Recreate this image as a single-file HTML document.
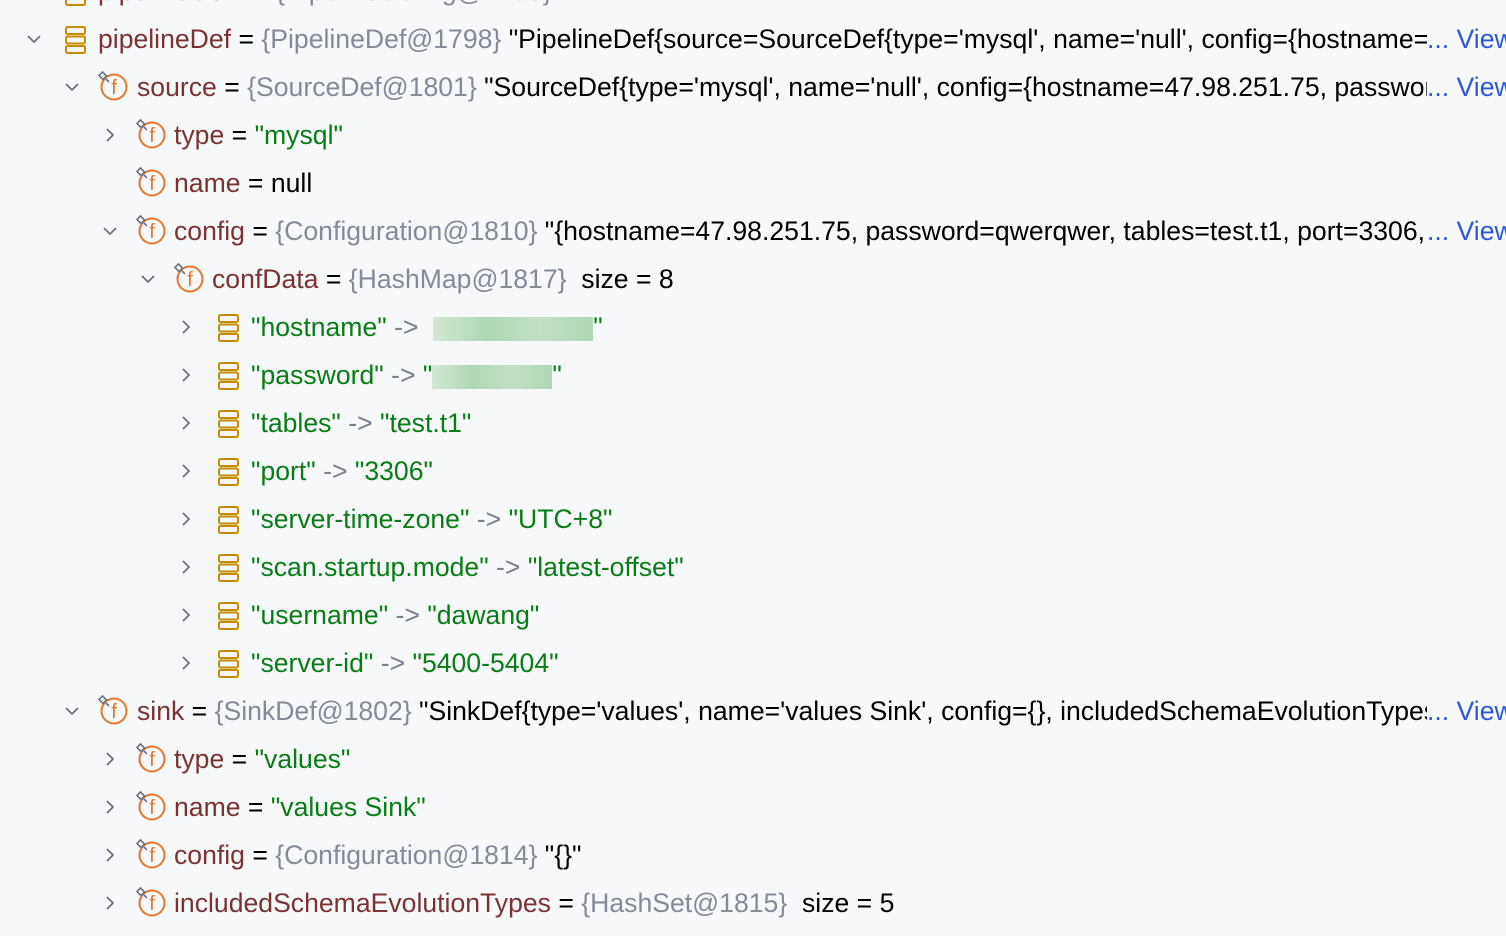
<!DOCTYPE html>
<html><head><meta charset="utf-8"><style>
html,body{margin:0;padding:0;background:#f7f8fa;width:1506px;height:936px;overflow:hidden}
body{font-family:"Liberation Sans",sans-serif;font-size:26.6px;color:#000;position:relative}
.r{position:absolute;left:0;height:48px;line-height:48px;white-space:nowrap;width:1506px}
.t{position:absolute;top:0;overflow:hidden;white-space:nowrap}
.chev{position:absolute;top:16px;width:16px;height:16px}
.ic{position:absolute;top:8px}
.n{color:#7b3232}.c{color:#858a99}.s{color:#087d15}.g{color:#7a7f8c}
.v{position:absolute;left:1427px;top:0;color:#2b5bd2}
.blur{display:inline-block;width:160px;height:24px;vertical-align:middle;background:linear-gradient(90deg,#cfe5cf,#a9d3ad,#bcdcbf,#a9d3ad);opacity:.9}
</style></head><body>

<div class="r" style="top:-33px">
<svg class="ic" style="left:64px;top:11px" width="24" height="28" viewBox="0 0 24 28"><g fill="none" stroke="#c98a00" stroke-width="2"><rect x="2" y="1" width="19" height="7" rx="1.5"/><rect x="2" y="10.5" width="19" height="7" rx="1.5"/><rect x="2" y="20" width="19" height="7" rx="1.5"/></g></svg>
<div class="t" style="left:98px"><span class="n">pipelineConf</span> = <span class="c">{PipelineConfig@1799}</span></div></div>

<div class="r" style="top:15px">
<svg class="chev" style="left:26px" viewBox="0 0 16 16"><path d="M2 5l6 6 6-6" fill="none" stroke="#6e7280" stroke-width="1.8"/></svg>
<svg class="ic" style="left:64px;top:11px" width="24" height="28" viewBox="0 0 24 28"><g fill="none" stroke="#c98a00" stroke-width="2"><rect x="2" y="1" width="19" height="7" rx="1.5"/><rect x="2" y="10.5" width="19" height="7" rx="1.5"/><rect x="2" y="20" width="19" height="7" rx="1.5"/></g></svg>
<div class="t" style="left:98px;width:1329px"><span class="n">pipelineDef</span> = <span class="c">{PipelineDef@1798}</span> "PipelineDef{source=SourceDef{type='mysql', name='null', config={hostname=47.98.251.75, password=qwerqwer}}"</div><span class="v">... View</span></div>

<div class="r" style="top:63px">
<svg class="chev" style="left:64px" viewBox="0 0 16 16"><path d="M2 5l6 6 6-6" fill="none" stroke="#6e7280" stroke-width="1.8"/></svg>
<svg class="ic" style="left:98px" width="32" height="32" viewBox="0 0 32 32"><circle cx="16" cy="16" r="12.5" fill="none" stroke="#e8762d" stroke-width="2"/><text x="16" y="23" font-family="Liberation Sans" font-size="20" fill="#e8762d" text-anchor="middle">f</text><path d="M1 4.5l3.5-3.5 4 4-3.5 3.5z" fill="#fff" stroke="#6e7280" stroke-width="1.6"/><path d="M8 8l3 3" stroke="#6e7280" stroke-width="1.6"/></svg>
<div class="t" style="left:137px;width:1290px"><span class="n">source</span> = <span class="c">{SourceDef@1801}</span> "SourceDef{type='mysql', name='null', config={hostname=47.98.251.75, password=qwerqwer}}"</div><span class="v">... View</span></div>

<div class="r" style="top:111px">
<svg class="chev" style="left:102px" viewBox="0 0 16 16"><path d="M5 2l6 6-6 6" fill="none" stroke="#6e7280" stroke-width="1.8"/></svg>
<svg class="ic" style="left:136px" width="32" height="32" viewBox="0 0 32 32"><circle cx="16" cy="16" r="12.5" fill="none" stroke="#e8762d" stroke-width="2"/><text x="16" y="23" font-family="Liberation Sans" font-size="20" fill="#e8762d" text-anchor="middle">f</text><path d="M1 4.5l3.5-3.5 4 4-3.5 3.5z" fill="#fff" stroke="#6e7280" stroke-width="1.6"/><path d="M8 8l3 3" stroke="#6e7280" stroke-width="1.6"/></svg>
<div class="t" style="left:174px"><span class="n">type</span> = <span class="s">"mysql"</span></div></div>

<div class="r" style="top:159px">
<svg class="ic" style="left:136px" width="32" height="32" viewBox="0 0 32 32"><circle cx="16" cy="16" r="12.5" fill="none" stroke="#e8762d" stroke-width="2"/><text x="16" y="23" font-family="Liberation Sans" font-size="20" fill="#e8762d" text-anchor="middle">f</text><path d="M1 4.5l3.5-3.5 4 4-3.5 3.5z" fill="#fff" stroke="#6e7280" stroke-width="1.6"/><path d="M8 8l3 3" stroke="#6e7280" stroke-width="1.6"/></svg>
<div class="t" style="left:174px"><span class="n">name</span> = null</div></div>

<div class="r" style="top:207px">
<svg class="chev" style="left:102px" viewBox="0 0 16 16"><path d="M2 5l6 6 6-6" fill="none" stroke="#6e7280" stroke-width="1.8"/></svg>
<svg class="ic" style="left:136px" width="32" height="32" viewBox="0 0 32 32"><circle cx="16" cy="16" r="12.5" fill="none" stroke="#e8762d" stroke-width="2"/><text x="16" y="23" font-family="Liberation Sans" font-size="20" fill="#e8762d" text-anchor="middle">f</text><path d="M1 4.5l3.5-3.5 4 4-3.5 3.5z" fill="#fff" stroke="#6e7280" stroke-width="1.6"/><path d="M8 8l3 3" stroke="#6e7280" stroke-width="1.6"/></svg>
<div class="t" style="left:174px;width:1253px"><span class="n">config</span> = <span class="c">{Configuration@1810}</span> "{hostname=47.98.251.75, password=qwerqwer, tables=test.t1, port=3306, server-time-zone=UTC+8}"</div><span class="v">... View</span></div>

<div class="r" style="top:255px">
<svg class="chev" style="left:140px" viewBox="0 0 16 16"><path d="M2 5l6 6 6-6" fill="none" stroke="#6e7280" stroke-width="1.8"/></svg>
<svg class="ic" style="left:174px" width="32" height="32" viewBox="0 0 32 32"><circle cx="16" cy="16" r="12.5" fill="none" stroke="#e8762d" stroke-width="2"/><text x="16" y="23" font-family="Liberation Sans" font-size="20" fill="#e8762d" text-anchor="middle">f</text><path d="M1 4.5l3.5-3.5 4 4-3.5 3.5z" fill="#fff" stroke="#6e7280" stroke-width="1.6"/><path d="M8 8l3 3" stroke="#6e7280" stroke-width="1.6"/></svg>
<div class="t" style="left:212px"><span class="n">confData</span> = <span class="c">{HashMap@1817}</span>&nbsp; size = 8</div></div>

<div class="r" style="top:687px">
<svg class="chev" style="left:64px" viewBox="0 0 16 16"><path d="M2 5l6 6 6-6" fill="none" stroke="#6e7280" stroke-width="1.8"/></svg>
<svg class="ic" style="left:98px" width="32" height="32" viewBox="0 0 32 32"><circle cx="16" cy="16" r="12.5" fill="none" stroke="#e8762d" stroke-width="2"/><text x="16" y="23" font-family="Liberation Sans" font-size="20" fill="#e8762d" text-anchor="middle">f</text><path d="M1 4.5l3.5-3.5 4 4-3.5 3.5z" fill="#fff" stroke="#6e7280" stroke-width="1.6"/><path d="M8 8l3 3" stroke="#6e7280" stroke-width="1.6"/></svg>
<div class="t" style="left:137px;width:1290px"><span class="n">sink</span> = <span class="c">{SinkDef@1802}</span> "SinkDef{type='values', name='values Sink', config={}, includedSchemaEvolutionTypes=[ADD_COLUMN, DROP_COLUMN]}"</div><span class="v">... View</span></div>

<div class="r" style="top:735px">
<svg class="chev" style="left:102px" viewBox="0 0 16 16"><path d="M5 2l6 6-6 6" fill="none" stroke="#6e7280" stroke-width="1.8"/></svg>
<svg class="ic" style="left:136px" width="32" height="32" viewBox="0 0 32 32"><circle cx="16" cy="16" r="12.5" fill="none" stroke="#e8762d" stroke-width="2"/><text x="16" y="23" font-family="Liberation Sans" font-size="20" fill="#e8762d" text-anchor="middle">f</text><path d="M1 4.5l3.5-3.5 4 4-3.5 3.5z" fill="#fff" stroke="#6e7280" stroke-width="1.6"/><path d="M8 8l3 3" stroke="#6e7280" stroke-width="1.6"/></svg>
<div class="t" style="left:174px"><span class="n">type</span> = <span class="s">"values"</span></div></div>

<div class="r" style="top:783px">
<svg class="chev" style="left:102px" viewBox="0 0 16 16"><path d="M5 2l6 6-6 6" fill="none" stroke="#6e7280" stroke-width="1.8"/></svg>
<svg class="ic" style="left:136px" width="32" height="32" viewBox="0 0 32 32"><circle cx="16" cy="16" r="12.5" fill="none" stroke="#e8762d" stroke-width="2"/><text x="16" y="23" font-family="Liberation Sans" font-size="20" fill="#e8762d" text-anchor="middle">f</text><path d="M1 4.5l3.5-3.5 4 4-3.5 3.5z" fill="#fff" stroke="#6e7280" stroke-width="1.6"/><path d="M8 8l3 3" stroke="#6e7280" stroke-width="1.6"/></svg>
<div class="t" style="left:174px"><span class="n">name</span> = <span class="s">"values Sink"</span></div></div>

<div class="r" style="top:831px">
<svg class="chev" style="left:102px" viewBox="0 0 16 16"><path d="M5 2l6 6-6 6" fill="none" stroke="#6e7280" stroke-width="1.8"/></svg>
<svg class="ic" style="left:136px" width="32" height="32" viewBox="0 0 32 32"><circle cx="16" cy="16" r="12.5" fill="none" stroke="#e8762d" stroke-width="2"/><text x="16" y="23" font-family="Liberation Sans" font-size="20" fill="#e8762d" text-anchor="middle">f</text><path d="M1 4.5l3.5-3.5 4 4-3.5 3.5z" fill="#fff" stroke="#6e7280" stroke-width="1.6"/><path d="M8 8l3 3" stroke="#6e7280" stroke-width="1.6"/></svg>
<div class="t" style="left:174px"><span class="n">config</span> = <span class="c">{Configuration@1814}</span> "{}"</div></div>

<div class="r" style="top:879px">
<svg class="chev" style="left:102px" viewBox="0 0 16 16"><path d="M5 2l6 6-6 6" fill="none" stroke="#6e7280" stroke-width="1.8"/></svg>
<svg class="ic" style="left:136px" width="32" height="32" viewBox="0 0 32 32"><circle cx="16" cy="16" r="12.5" fill="none" stroke="#e8762d" stroke-width="2"/><text x="16" y="23" font-family="Liberation Sans" font-size="20" fill="#e8762d" text-anchor="middle">f</text><path d="M1 4.5l3.5-3.5 4 4-3.5 3.5z" fill="#fff" stroke="#6e7280" stroke-width="1.6"/><path d="M8 8l3 3" stroke="#6e7280" stroke-width="1.6"/></svg>
<div class="t" style="left:174px"><span class="n">includedSchemaEvolutionTypes</span> = <span class="c">{HashSet@1815}</span>&nbsp; size = 5</div></div>

<div class="r" style="top:927px">
<svg class="chev" style="left:64px" viewBox="0 0 16 16"><path d="M5 2l6 6-6 6" fill="none" stroke="#6e7280" stroke-width="1.8"/></svg>
</div>

<div class="r" style="top:303px"><svg class="chev" style="left:178px" viewBox="0 0 16 16"><path d="M5 2l6 6-6 6" fill="none" stroke="#6e7280" stroke-width="1.8"/></svg><svg class="ic" style="left:217px;top:11px" width="24" height="28" viewBox="0 0 24 28"><g fill="none" stroke="#c98a00" stroke-width="2"><rect x="2" y="1" width="19" height="7" rx="1.5"/><rect x="2" y="10.5" width="19" height="7" rx="1.5"/><rect x="2" y="20" width="19" height="7" rx="1.5"/></g></svg><div class="t" style="left:251px"><span class="s">"hostname"</span> <span class="g">-&gt;</span> <span class="s">&nbsp;<span class="blur"></span>"</span></div></div>
<div class="r" style="top:351px"><svg class="chev" style="left:178px" viewBox="0 0 16 16"><path d="M5 2l6 6-6 6" fill="none" stroke="#6e7280" stroke-width="1.8"/></svg><svg class="ic" style="left:217px;top:11px" width="24" height="28" viewBox="0 0 24 28"><g fill="none" stroke="#c98a00" stroke-width="2"><rect x="2" y="1" width="19" height="7" rx="1.5"/><rect x="2" y="10.5" width="19" height="7" rx="1.5"/><rect x="2" y="20" width="19" height="7" rx="1.5"/></g></svg><div class="t" style="left:251px"><span class="s">"password"</span> <span class="g">-&gt;</span> <span class="s">"<span class="blur" style="width:120px"></span>"</span></div></div>
<div class="r" style="top:399px"><svg class="chev" style="left:178px" viewBox="0 0 16 16"><path d="M5 2l6 6-6 6" fill="none" stroke="#6e7280" stroke-width="1.8"/></svg><svg class="ic" style="left:217px;top:11px" width="24" height="28" viewBox="0 0 24 28"><g fill="none" stroke="#c98a00" stroke-width="2"><rect x="2" y="1" width="19" height="7" rx="1.5"/><rect x="2" y="10.5" width="19" height="7" rx="1.5"/><rect x="2" y="20" width="19" height="7" rx="1.5"/></g></svg><div class="t" style="left:251px"><span class="s">"tables"</span> <span class="g">-&gt;</span> <span class="s">"test.t1"</span></div></div>
<div class="r" style="top:447px"><svg class="chev" style="left:178px" viewBox="0 0 16 16"><path d="M5 2l6 6-6 6" fill="none" stroke="#6e7280" stroke-width="1.8"/></svg><svg class="ic" style="left:217px;top:11px" width="24" height="28" viewBox="0 0 24 28"><g fill="none" stroke="#c98a00" stroke-width="2"><rect x="2" y="1" width="19" height="7" rx="1.5"/><rect x="2" y="10.5" width="19" height="7" rx="1.5"/><rect x="2" y="20" width="19" height="7" rx="1.5"/></g></svg><div class="t" style="left:251px"><span class="s">"port"</span> <span class="g">-&gt;</span> <span class="s">"3306"</span></div></div>
<div class="r" style="top:495px"><svg class="chev" style="left:178px" viewBox="0 0 16 16"><path d="M5 2l6 6-6 6" fill="none" stroke="#6e7280" stroke-width="1.8"/></svg><svg class="ic" style="left:217px;top:11px" width="24" height="28" viewBox="0 0 24 28"><g fill="none" stroke="#c98a00" stroke-width="2"><rect x="2" y="1" width="19" height="7" rx="1.5"/><rect x="2" y="10.5" width="19" height="7" rx="1.5"/><rect x="2" y="20" width="19" height="7" rx="1.5"/></g></svg><div class="t" style="left:251px"><span class="s">"server-time-zone"</span> <span class="g">-&gt;</span> <span class="s">"UTC+8"</span></div></div>
<div class="r" style="top:543px"><svg class="chev" style="left:178px" viewBox="0 0 16 16"><path d="M5 2l6 6-6 6" fill="none" stroke="#6e7280" stroke-width="1.8"/></svg><svg class="ic" style="left:217px;top:11px" width="24" height="28" viewBox="0 0 24 28"><g fill="none" stroke="#c98a00" stroke-width="2"><rect x="2" y="1" width="19" height="7" rx="1.5"/><rect x="2" y="10.5" width="19" height="7" rx="1.5"/><rect x="2" y="20" width="19" height="7" rx="1.5"/></g></svg><div class="t" style="left:251px"><span class="s">"scan.startup.mode"</span> <span class="g">-&gt;</span> <span class="s">"latest-offset"</span></div></div>
<div class="r" style="top:591px"><svg class="chev" style="left:178px" viewBox="0 0 16 16"><path d="M5 2l6 6-6 6" fill="none" stroke="#6e7280" stroke-width="1.8"/></svg><svg class="ic" style="left:217px;top:11px" width="24" height="28" viewBox="0 0 24 28"><g fill="none" stroke="#c98a00" stroke-width="2"><rect x="2" y="1" width="19" height="7" rx="1.5"/><rect x="2" y="10.5" width="19" height="7" rx="1.5"/><rect x="2" y="20" width="19" height="7" rx="1.5"/></g></svg><div class="t" style="left:251px"><span class="s">"username"</span> <span class="g">-&gt;</span> <span class="s">"dawang"</span></div></div>
<div class="r" style="top:639px"><svg class="chev" style="left:178px" viewBox="0 0 16 16"><path d="M5 2l6 6-6 6" fill="none" stroke="#6e7280" stroke-width="1.8"/></svg><svg class="ic" style="left:217px;top:11px" width="24" height="28" viewBox="0 0 24 28"><g fill="none" stroke="#c98a00" stroke-width="2"><rect x="2" y="1" width="19" height="7" rx="1.5"/><rect x="2" y="10.5" width="19" height="7" rx="1.5"/><rect x="2" y="20" width="19" height="7" rx="1.5"/></g></svg><div class="t" style="left:251px"><span class="s">"server-id"</span> <span class="g">-&gt;</span> <span class="s">"5400-5404"</span></div></div>

</body></html>
